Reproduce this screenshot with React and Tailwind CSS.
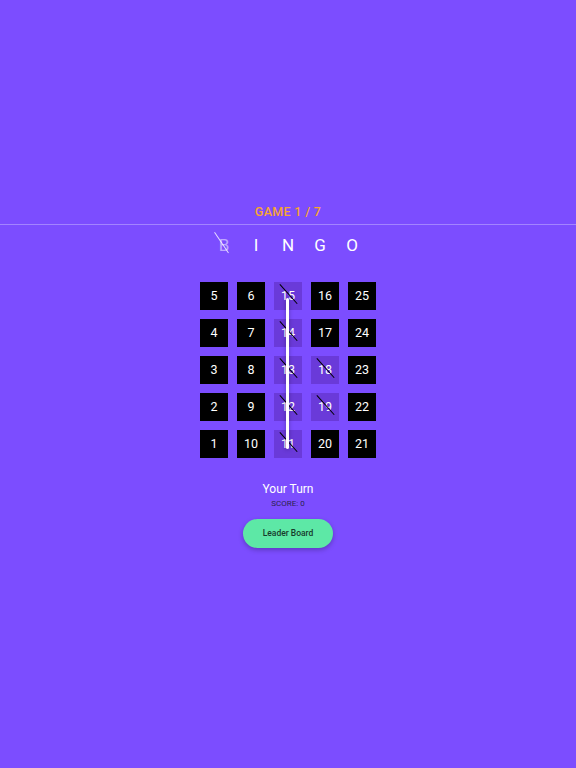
const rows = [
  [5, 6, 15, 16, 25],
  [4, 7, 14, 17, 24],
  [3, 8, 13, 18, 23],
  [2, 9, 12, 19, 22],
  [1, 10, 11, 20, 21],
]

const marked = new Set([15, 14, 13, 12, 11, 18, 19])

export default function App() {
  const letters = ["B", "I", "N", "G", "O"]
  return (
    <div
      className="min-h-[768px] w-full bg-[#7c4dff] flex flex-col items-center pt-[204px]"
      style={{ fontFamily: "Roboto, 'Noto Sans', sans-serif" }}
    >
      <div className="h-[16px] text-[12.5px] leading-[16px] font-medium tracking-wide text-[#f7a531]">
        GAME 1 / 7
      </div>
      <div className="mt-[4px] h-[1px] w-full bg-[#a384ff]" />

      <div className="mt-[10px] flex h-[20px]">
        {letters.map((l, i) => (
          <div
            key={l}
            className="relative w-[32px] text-center text-[17px] leading-[20px] text-white"
          >
            <span className={i === 0 ? "opacity-50" : ""}>{l}</span>
            {i === 0 && (
              <div className="absolute left-[13.4px] top-[-5px] h-[25px] w-[1.2px] -rotate-[34deg] bg-white/80" />
            )}
          </div>
        ))}
      </div>

      <div className="relative mt-[27px] grid grid-cols-5 gap-[9px]">
        {rows.flat().map((n) => {
          const on = marked.has(n)
          return (
            <div
              key={n}
              className={`relative flex h-[28px] w-[28px] items-center justify-center text-[12.5px] text-white ${on ? "bg-[#6a3ad9]" : "bg-black"}`}
            >
              {n}
              {on && (
                <div className="absolute left-[13.9px] top-[-1.5px] h-[26px] w-[1.3px] -rotate-[42deg] bg-black" />
              )}
            </div>
          )
        })}
        <div className="absolute left-[86px] top-[16px] h-[151px] w-[3px] rounded-full bg-white shadow-[0_1px_4px_rgba(0,0,0,0.3)]" />
      </div>

      <div className="mt-[23px] h-[16px] text-[12px] leading-[16px] text-white">Your Turn</div>
      <div className="mt-[2px] h-[10px] text-[8px] leading-[10px] text-[#2b2250]">SCORE: 0</div>
      <button className="mt-[10px] flex h-[29px] w-[90px] items-center justify-center rounded-full bg-[#5de8a6] text-[8.5px] font-medium text-[#183b2c] shadow-[0_2px_5px_rgba(0,0,0,0.25)]">
        Leader Board
      </button>
    </div>
  )
}
